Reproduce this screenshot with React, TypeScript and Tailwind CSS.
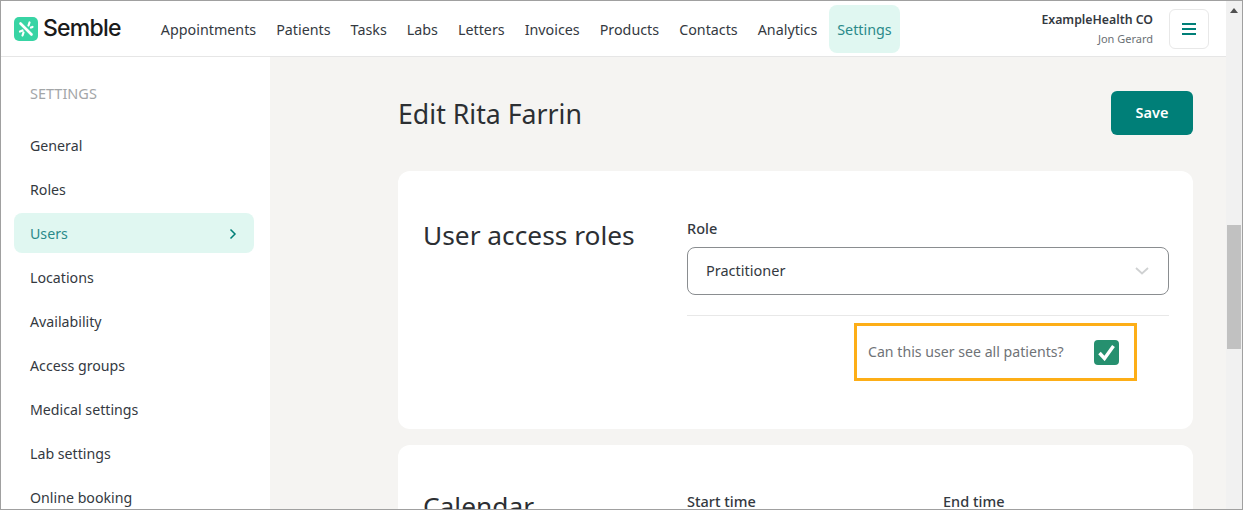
const NAV = ["Appointments", "Patients", "Tasks", "Labs", "Letters", "Invoices", "Products", "Contacts", "Analytics"]
const SIDE = ["General", "Roles", "Users", "Locations", "Availability", "Access groups", "Medical settings", "Lab settings", "Online booking"]

const FONT = "font-['Noto_Sans',sans-serif]"

function Logo() {
  return (
    <div className="flex items-center gap-[5px]">
      <svg width="24" height="24" viewBox="0 0 24 24">
        <rect width="24" height="24" rx="5" fill="#38d4a4" />
        <path d="M6.5 6.5 17.5 17.5" stroke="#fff" strokeWidth="2.6" strokeLinecap="round" />
        <path d="M15.5 5.5 14.5 8.5M17 10.5l1.5-.6M6 14.5l2.5-1M8.5 18.5l1-3" stroke="#fff" strokeWidth="2.2" strokeLinecap="round" />
      </svg>
      <span className="font-['Inter',sans-serif] text-[23px] font-medium tracking-[-0.75px] text-[#1a1a1a]">Semble</span>
    </div>
  )
}

function Header() {
  return (
    <header className="flex h-[56px] shrink-0 items-center border-b border-[#e6e6e6] bg-white pl-[13px] pr-[17px]">
      <Logo />
      <nav className="ml-[32px] flex items-center gap-1 pt-[2px]">
        {NAV.map(n => (
          <a key={n} className="px-2 text-[14.3px] text-[#34393f]">{n}</a>
        ))}
        <a className="flex h-12 -mt-[2px] items-center rounded-lg bg-[#e0f7f1] px-2 pt-[2px] text-[14.3px] text-[#2a8a8a]">Settings</a>
      </nav>
      <div className="ml-auto mr-4 pt-[2px] text-right">
        <div className="text-[12.3px] leading-[18px] font-semibold text-[#34393f]">ExampleHealth CO</div>
        <div className="text-[11px] leading-[20px] text-[#6b7075]">Jon Gerard</div>
      </div>
      <button className="flex h-10 w-10 items-center justify-center rounded-md border border-[#e8e8e8] bg-white">
        <svg width="14" height="12" viewBox="0 0 14 12">
          <path d="M0 1h14M0 6h14M0 11h14" stroke="#007f78" strokeWidth="2" />
        </svg>
      </button>
    </header>
  )
}

function Sidebar() {
  return (
    <aside className="w-[269px] shrink-0 bg-white pl-[13px] pr-[16px] pt-[26px]">
      <div className="mb-[23px] pl-4 text-[14.5px] leading-5 text-[#a3a6a8]">SETTINGS</div>
      {SIDE.map(s => s === "Users" ? (
        <div key={s} className="-mt-px mb-[5px] flex h-10 items-center justify-between rounded-lg bg-[#e0f7f1] pl-4 pr-[17px] pt-[2px] text-[14.2px] text-[#2a8a8a]">
          {s}
          <svg width="8" height="12" viewBox="0 0 8 12" fill="none">
            <path d="M1.5 1.5 6 6l-4.5 4.5" stroke="#007f78" strokeWidth="1.5" />
          </svg>
        </div>
      ) : (
        <div key={s} className="mb-1 flex h-10 items-center pl-4 text-[14.2px] text-[#34393f]">{s}</div>
      ))}
    </aside>
  )
}

function Main() {
  return (
    <main className="flex-1 overflow-hidden bg-[#f5f4f2] pl-[128px] pr-[33px] pt-[34px]">
      <div className="flex h-11 items-center justify-between">
        <h1 className="pt-[2px] text-[26.7px] leading-[44px] text-[#2c2f33]">Edit Rita Farrin</h1>
        <button className="h-11 w-[82px] rounded-md bg-[#007f78] text-[14.5px] font-semibold text-white">Save</button>
      </div>
      <section className="mt-9 flex h-[258px] rounded-xl bg-white pl-[25px] pr-6 pt-[45px]">
        <h2 className="w-[264px] shrink-0 text-[26.3px] leading-[38px] text-[#2c2f33]">User access roles</h2>
        <div className="flex-1">
          <label className="block text-[14.5px] leading-5 font-medium text-[#34393f] mt-[2px]">Role</label>
          <div className="mt-[9px] flex h-12 items-center justify-between rounded-lg border border-[#8a8d90] pl-[18px] pr-[19px] text-[14.5px] text-[#34393f]">
            Practitioner
            <svg width="14" height="8" viewBox="0 0 14 8" fill="none">
              <path d="M1 1l6 5.5L13 1" stroke="#cfd1d2" strokeWidth="1.8" />
            </svg>
          </div>
          <div className="mt-5 border-t border-[#e8e8e8]" />
          <div className="ml-[167px] mt-[7px] flex h-[58px] w-[283px] items-center justify-between border-[3.5px] border-[#fdae17] pl-[11px] pr-[15px]">
            <span className="text-[14.15px] text-[#6f7377]">Can this user see all patients?</span>
            <span className="flex h-[25px] w-[25px] items-center justify-center rounded-[4px] bg-[#26906f]">
              <svg width="17" height="17" viewBox="0 0 17 17" fill="none">
                <path d="M1.5 9l5 5.5L15.5 2" stroke="#fff" strokeWidth="3.4" />
              </svg>
            </span>
          </div>
        </div>
      </section>
      <section className="mt-4 flex h-[200px] rounded-xl bg-white pl-[25px] pt-[42px]">
        <h2 className="w-[264px] shrink-0 text-[26.3px] leading-[38px] text-[#2c2f33]">Calendar</h2>
        <div className="mt-[4px] w-[256px] text-[14.5px] font-medium leading-5 text-[#34393f]">Start time</div>
        <div className="mt-[4px] text-[14.5px] font-medium leading-5 text-[#34393f]">End time</div>
      </section>
    </main>
  )
}

function Scrollbar() {
  return (
    <div className="flex w-4 shrink-0 flex-col items-center bg-[#f1f1f1]">
      <svg width="8" height="5" viewBox="0 0 8 5" className="mt-[7px]">
        <path d="M0 5 4 0l4 5z" fill="#505050" />
      </svg>
      <div className="mt-[212px] h-[124px] w-[14px] bg-[#c1c1c1]" />
    </div>
  )
}

export default function App() {
  return (
    <div className={`${FONT} flex h-[510px] w-[1243px] overflow-hidden border border-[#a0a0a0]`}>
      <div className="flex min-w-0 flex-1 flex-col">
        <Header />
        <div className="flex min-h-0 flex-1">
          <Sidebar />
          <Main />
        </div>
      </div>
      <Scrollbar />
    </div>
  )
}
